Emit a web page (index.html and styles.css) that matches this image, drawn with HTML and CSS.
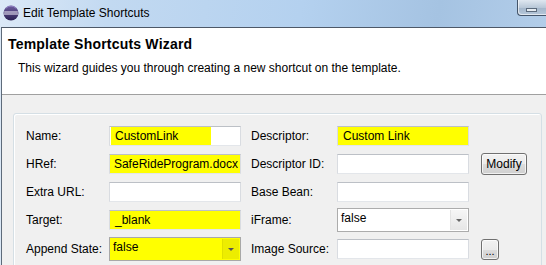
FILE: index.html
```html
<!DOCTYPE html>
<html>
<head>
<meta charset="utf-8">
<link rel="stylesheet" href="styles.css">
</head>
<body>
<div class="window">
  <div class="titlebar">
    <svg class="app-icon" width="16" height="16" viewBox="0 0 16 16">
      <defs>
        <linearGradient id="ball" x1="0" y1="0" x2="0" y2="1">
          <stop offset="0" stop-color="#6f5ea0"/>
          <stop offset="1" stop-color="#2b2154"/>
        </linearGradient>
      </defs>
      <circle cx="8" cy="8" r="7.5" fill="url(#ball)"/>
      <path d="M1.2 6.4h13.6v1H1.2zM1 8.6h14v1H1z" fill="#f4f2fb"/>
      <path d="M3 3.2a7 7 0 0 1 10 0" fill="none" stroke="#9d8fcf" stroke-width="0.8"/>
    </svg>
    <span class="title">Edit Template Shortcuts</span>
    <div class="ctl-btn"><span class="ctl-glyph"></span></div>
  </div>
  <div class="client">
    <div class="header">
      <h1 class="wiz-title">Template Shortcuts Wizard</h1>
      <p class="wiz-desc">This wizard guides you through creating a new shortcut on the template.</p>
    </div>
    <div class="body">
      <div class="group">
        <div class="form">
          <label class="lbl">Name:</label>
          <div class="field"><span class="hl">CustomLink</span></div>
          <label class="lbl lbl-r">Descriptor:</label>
          <div class="field yellow">Custom Link</div>
          <div></div>

          <label class="lbl">HRef:</label>
          <div class="field yellow clip"><span class="clip-box"><span class="clip-text">Docs\SafeRideProgram.docx</span></span></div>
          <label class="lbl lbl-r">Descriptor ID:</label>
          <div class="field"></div>
          <div class="btn btn-modify">Modify</div>

          <label class="lbl">Extra URL:</label>
          <div class="field"></div>
          <label class="lbl lbl-r">Base Bean:</label>
          <div class="field"></div>
          <div></div>

          <label class="lbl">Target:</label>
          <div class="field yellow">_blank</div>
          <label class="lbl lbl-r">iFrame:</label>
          <div class="combo"><span class="combo-text">false</span><span class="combo-btn"><span class="arrow"></span></span></div>
          <div></div>

          <label class="lbl">Append State:</label>
          <div class="combo yellow-combo"><span class="combo-text">false</span><span class="combo-btn"><span class="arrow"></span></span></div>
          <label class="lbl lbl-r">Image Source:</label>
          <div class="field"></div>
          <div class="btn btn-dots">...</div>
        </div>
      </div>
    </div>
  </div>
</div>
</body>
</html>
```

FILE: styles.css
```css
html, body {
  margin: 0;
  padding: 0;
}
body {
  width: 546px;
  height: 265px;
  overflow: hidden;
  font-family: "Liberation Sans", Arial, sans-serif;
  font-size: 12px;
  color: #000;
  background: #f0f0f0;
}
.window {
  width: 546px;
  height: 265px;
  overflow: hidden;
  display: flex;
  flex-direction: column;
  background: #dbe8f6;
}
.titlebar {
  height: 27px;
  flex: none;
  display: flex;
  align-items: flex-start;
  padding-left: 3px;
  background: linear-gradient(100deg, #dce9f7 0%, #c2d9f1 20%, #b4d1ef 55%, #a5c3e2 80%, #b2cde9 100%);
}
.app-icon {
  flex: none;
  margin-top: 5px;
}
.title {
  margin-left: 4px;
  line-height: 26px;
  color: #000;
  white-space: nowrap;
}
.ctl-btn {
  margin-left: auto;
  width: 29px;
  height: 16px;
  box-sizing: border-box;
  border: 1px solid #44556a;
  border-top: none;
  border-right: none;
  border-bottom-left-radius: 4px;
  background: linear-gradient(#dfe7f0, #b9c8d8 50%, #a4b6ca 51%, #b5c7da);
  box-shadow: inset 1px -1px 0 rgba(255,255,255,0.6);
  padding: 8px 0 0 8px;
}
.ctl-glyph {
  display: block;
  width: 11px;
  height: 4px;
  box-sizing: border-box;
  border: 1px solid #5b6a7c;
  background: #e6ecf2;
}
.client {
  flex: 1;
  display: flex;
  flex-direction: column;
  margin-left: 1px;
  border-left: 1px solid #5e6b7a;
  border-top: 1px solid #4d5867;
  background: #f0f0f0;
  min-height: 0;
  overflow: hidden;
}
.header {
  height: 58px;
  padding: 8px 0 0 6px;
  background: #fff;
  border-bottom: 1px solid #a0a0a0;
  flex: none;
}
.wiz-title {
  margin: 0;
  font-size: 14px;
  font-weight: bold;
  line-height: 16px;
  letter-spacing: 0.2px;
}
.wiz-desc {
  margin: 9px 0 0 10px;
  line-height: 14px;
}
.body {
  flex: 1;
  padding: 18px 4px 0 11px;
  min-height: 0;
  overflow: hidden;
}
.group {
  height: 150px;
  border: 1px solid #d5dfe5;
  border-radius: 3px;
  box-shadow: inset 1px 1px 0 #fff;
  padding: 8px 0 0 12px;
}
.form {
  display: grid;
  grid-template-columns: 83px 132px 96px 132px 1fr;
  grid-template-rows: 28px 28px 28px 28px 30px;
  align-items: center;
}
.lbl {
  line-height: 20px;
  white-space: nowrap;
}
.lbl-r {
  padding-left: 10px;
}
.field {
  height: 20px;
  box-sizing: border-box;
  border: 1px solid;
  border-color: #bcc0c6 #d9dce1 #e3e6ea #d9dce1;
  background: #fff;
  line-height: 18px;
  padding-left: 5px;
  white-space: nowrap;
  overflow: hidden;
}
.field .hl {
  display: inline-block;
  width: 96px;
  padding-left: 4px;
  margin-left: -4px;
  background: #ffff00;
}
.field.yellow {
  background: #ffff00;
}
.field.clip {
  display: flex;
  padding-left: 4px;
  padding-right: 2px;
}
.clip-box {
  flex: 1;
  min-width: 0;
  overflow: hidden;
  display: flex;
  justify-content: flex-end;
}
.clip-text {
  flex: none;
}
.combo {
  height: 24px;
  box-sizing: border-box;
  border: 1px solid #acacac;
  background: #fff;
  display: flex;
  align-items: stretch;
}
.combo-text {
  flex: 1;
  padding-left: 3px;
  line-height: 18px;
}
.combo-btn {
  width: 16px;
  flex: none;
  margin: 1px 1px 1px 0;
  border-left: 1px solid #e3e3e3;
  background: linear-gradient(#f6f6f6, #e6e6e6);
  display: flex;
  align-items: center;
  justify-content: center;
}
.arrow {
  width: 0;
  height: 0;
  border-left: 3px solid transparent;
  border-right: 3px solid transparent;
  border-top: 3px solid #666;
  margin-top: 1px;
}
.yellow-combo {
  background: #ffff00;
  border-color: #a8a8a8;
}
.yellow-combo .combo-btn {
  background: #eded00;
  border-left-color: #e0e000;
}
.yellow-combo .arrow {
  border-top-color: #555;
}
.btn {
  justify-self: start;
  margin-left: 12px;
  box-sizing: border-box;
  border: 1px solid #707070;
  border-radius: 3px;
  background: linear-gradient(#f2f2f2, #ebebeb 50%, #dddddd 51%, #cfcfcf);
  box-shadow: inset 0 0 0 1px rgba(255,255,255,0.7);
  text-align: center;
}
.btn-modify {
  width: 46px;
  height: 22px;
  line-height: 20px;
}
.btn-dots {
  width: 18px;
  height: 21px;
  line-height: 22px;
  font-size: 11px;
}
```
